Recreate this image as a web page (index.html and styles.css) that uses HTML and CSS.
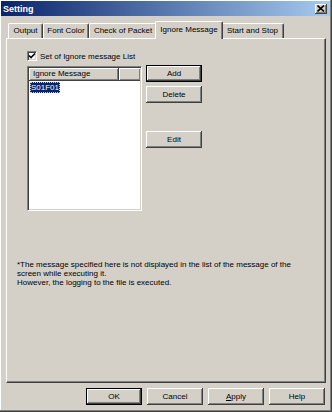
FILE: index.html
```html
<!DOCTYPE html>
<html lang="en">
<head>
    <meta charset="UTF-8">
    <title>Setting</title>
    <link rel="stylesheet" href="styles.css">
</head>
<body>
    <div class="window">
        <div class="titlebar">
            <span class="title">Setting</span>
            <span class="close">
                <svg width="8" height="7" viewBox="0 0 8 7"><path d="M0.5 0.5 L7 6.5 M7 0.5 L0.5 6.5" stroke="#000" stroke-width="1.6"/></svg>
            </span>
        </div>

        <div class="tabs">
            <div class="tab t-output">Output</div>
            <div class="tab t-font">Font Color</div>
            <div class="tab t-check">Check of Packet</div>
            <div class="tab active">Ignore Message</div>
            <div class="tab t-start">Start and Stop</div>
        </div>

        <div class="panel">
            <label class="check">
                <span class="box">
                    <svg width="8" height="8" viewBox="0 0 8 8"><path d="M1 3.5 L3 5.5 L7 1.5" fill="none" stroke="#000" stroke-width="1.6"/></svg>
                </span>
                Set of Ignore message List
            </label>

            <div class="row">
                <div class="listview">
                    <div class="lv-head">
                        <span class="col col1">Ignore Message</span>
                        <span class="col col2"></span>
                    </div>
                    <div class="lv-body">
                        <span class="item selected">S01F01</span>
                    </div>
                </div>
                <div class="side">
                    <button class="btn default">Add</button>
                    <button class="btn">Delete</button>
                    <button class="btn edit">Edit</button>
                </div>
            </div>

            <p class="note">*The message specified here is not displayed in the list of the message of the screen while executing it.<br>However, the logging to the file is executed.</p>
        </div>

        <div class="footer">
            <button class="btn default">OK</button>
            <button class="btn">Cancel</button>
            <button class="btn"><u>A</u>pply</button>
            <button class="btn">Help</button>
        </div>
    </div>
</body>
</html>
```

FILE: styles.css
```css
body {
    margin: 0;
    padding: 0;
    font-family: "Liberation Sans", Arial, sans-serif;
    font-size: 8px;
    color: #000;
    background: #d4d0c8;
}

.window {
    box-sizing: border-box;
    width: 332px;
    height: 412px;
    padding: 1px 2px 2px 1px;
    background: #d4d0c8;
    box-shadow: inset -1px -1px #404040, inset -2px -2px #808080, inset 1px 1px #fff;
}

/* title bar */
.titlebar {
    height: 15px;
    display: flex;
    align-items: center;
    justify-content: space-between;
    padding: 0 3px 0 2px;
    background: linear-gradient(to right, #0a246a, #a6caf0);
}

.title {
    color: #fff;
    font-weight: bold;
    font-size: 9px;
}

.close {
    box-sizing: border-box;
    width: 12px;
    height: 10px;
    display: flex;
    align-items: center;
    justify-content: center;
    background: #d4d0c8;
    box-shadow: inset -1px -1px #404040, inset 1px 1px #fff, inset -2px -2px #808080;
}

/* tabs */
.tabs {
    display: flex;
    align-items: flex-end;
    height: 17px;
    margin: 5px 0 0 7px;
}

.tab {
    box-sizing: border-box;
    height: 15px;
    line-height: 14px;
    text-align: center;
    white-space: nowrap;
    border-top: 1px solid #fff;
    border-left: 1px solid #fff;
    border-right: 1px solid #404040;
    border-radius: 2px 2px 0 0;
    box-shadow: inset -1px 0 #808080;
    background: #d4d0c8;
}

.t-output { width: 35px; }
.t-font { width: 46px; }
.t-check { width: 68px; }
.t-start { width: 63px; }

.tab.active {
    width: 68px;
    height: 18px;
    line-height: 15px;
    margin: 0 -2px -1px -2px;
    position: relative;
    z-index: 1;
}

/* panel */
.panel {
    box-sizing: border-box;
    width: 320px;
    height: 345px;
    margin-left: 5px;
    padding: 12px 0 0 20px;
    border-top: 1px solid #fff;
    border-left: 1px solid #fff;
    border-right: 1px solid #404040;
    border-bottom: 1px solid #404040;
    box-shadow: inset -1px -1px #808080;
}

.check {
    display: flex;
    align-items: center;
    gap: 3px;
    height: 10px;
}

.box {
    box-sizing: border-box;
    width: 10px;
    height: 10px;
    display: flex;
    align-items: center;
    justify-content: center;
    background: #fff;
    border-top: 1px solid #808080;
    border-left: 1px solid #808080;
    border-right: 1px solid #fff;
    border-bottom: 1px solid #fff;
    box-shadow: inset 1px 1px #404040, inset -1px -1px #d4d0c8;
}

.row {
    display: flex;
    gap: 4px;
    margin-top: 4px;
}

.listview {
    box-sizing: border-box;
    width: 115px;
    height: 145px;
    margin-top: 1px;
    background: #fff;
    border-top: 1px solid #808080;
    border-left: 1px solid #808080;
    border-right: 1px solid #fff;
    border-bottom: 1px solid #fff;
    box-shadow: inset 1px 1px #404040, inset -1px -1px #d4d0c8;
    padding: 1px;
}

.lv-head {
    display: flex;
    height: 13px;
}

.col {
    box-sizing: border-box;
    height: 13px;
    line-height: 12px;
    padding-left: 4px;
    background: #d4d0c8;
    box-shadow: inset 1px 1px #fff, inset -1px -1px #808080;
    border-right: 1px solid #404040;
    border-bottom: 1px solid #404040;
}

.col1 { width: 90px; }
.col2 { flex: 1; border-right: none; }

.lv-body {
    padding: 1px 0 0 1px;
}

.item {
    display: inline-block;
    height: 11px;
    line-height: 11px;
    padding: 0 1px;
}

.item.selected {
    background: #0a246a;
    color: #fff;
    outline: 1px dotted #d4d0c8;
    outline-offset: -1px;
}

.side {
    display: flex;
    flex-direction: column;
    gap: 4px;
}

.btn {
    box-sizing: border-box;
    width: 56px;
    height: 17px;
    padding: 0;
    font-family: inherit;
    font-size: 8px;
    color: #000;
    background: #d4d0c8;
    border: none;
    box-shadow: inset -1px -1px #404040, inset 1px 1px #fff, inset -2px -2px #808080;
}

.btn.default {
    border: 1px solid #000;
}

.btn.edit {
    margin-top: 24px;
}

.note {
    max-width: 292px;
    margin: 49px 0 0 -10px;
    line-height: 9px;
}

/* bottom buttons */
.footer {
    display: flex;
    justify-content: flex-end;
    gap: 5px;
    margin: 5px 5px 0 0;
}
```
